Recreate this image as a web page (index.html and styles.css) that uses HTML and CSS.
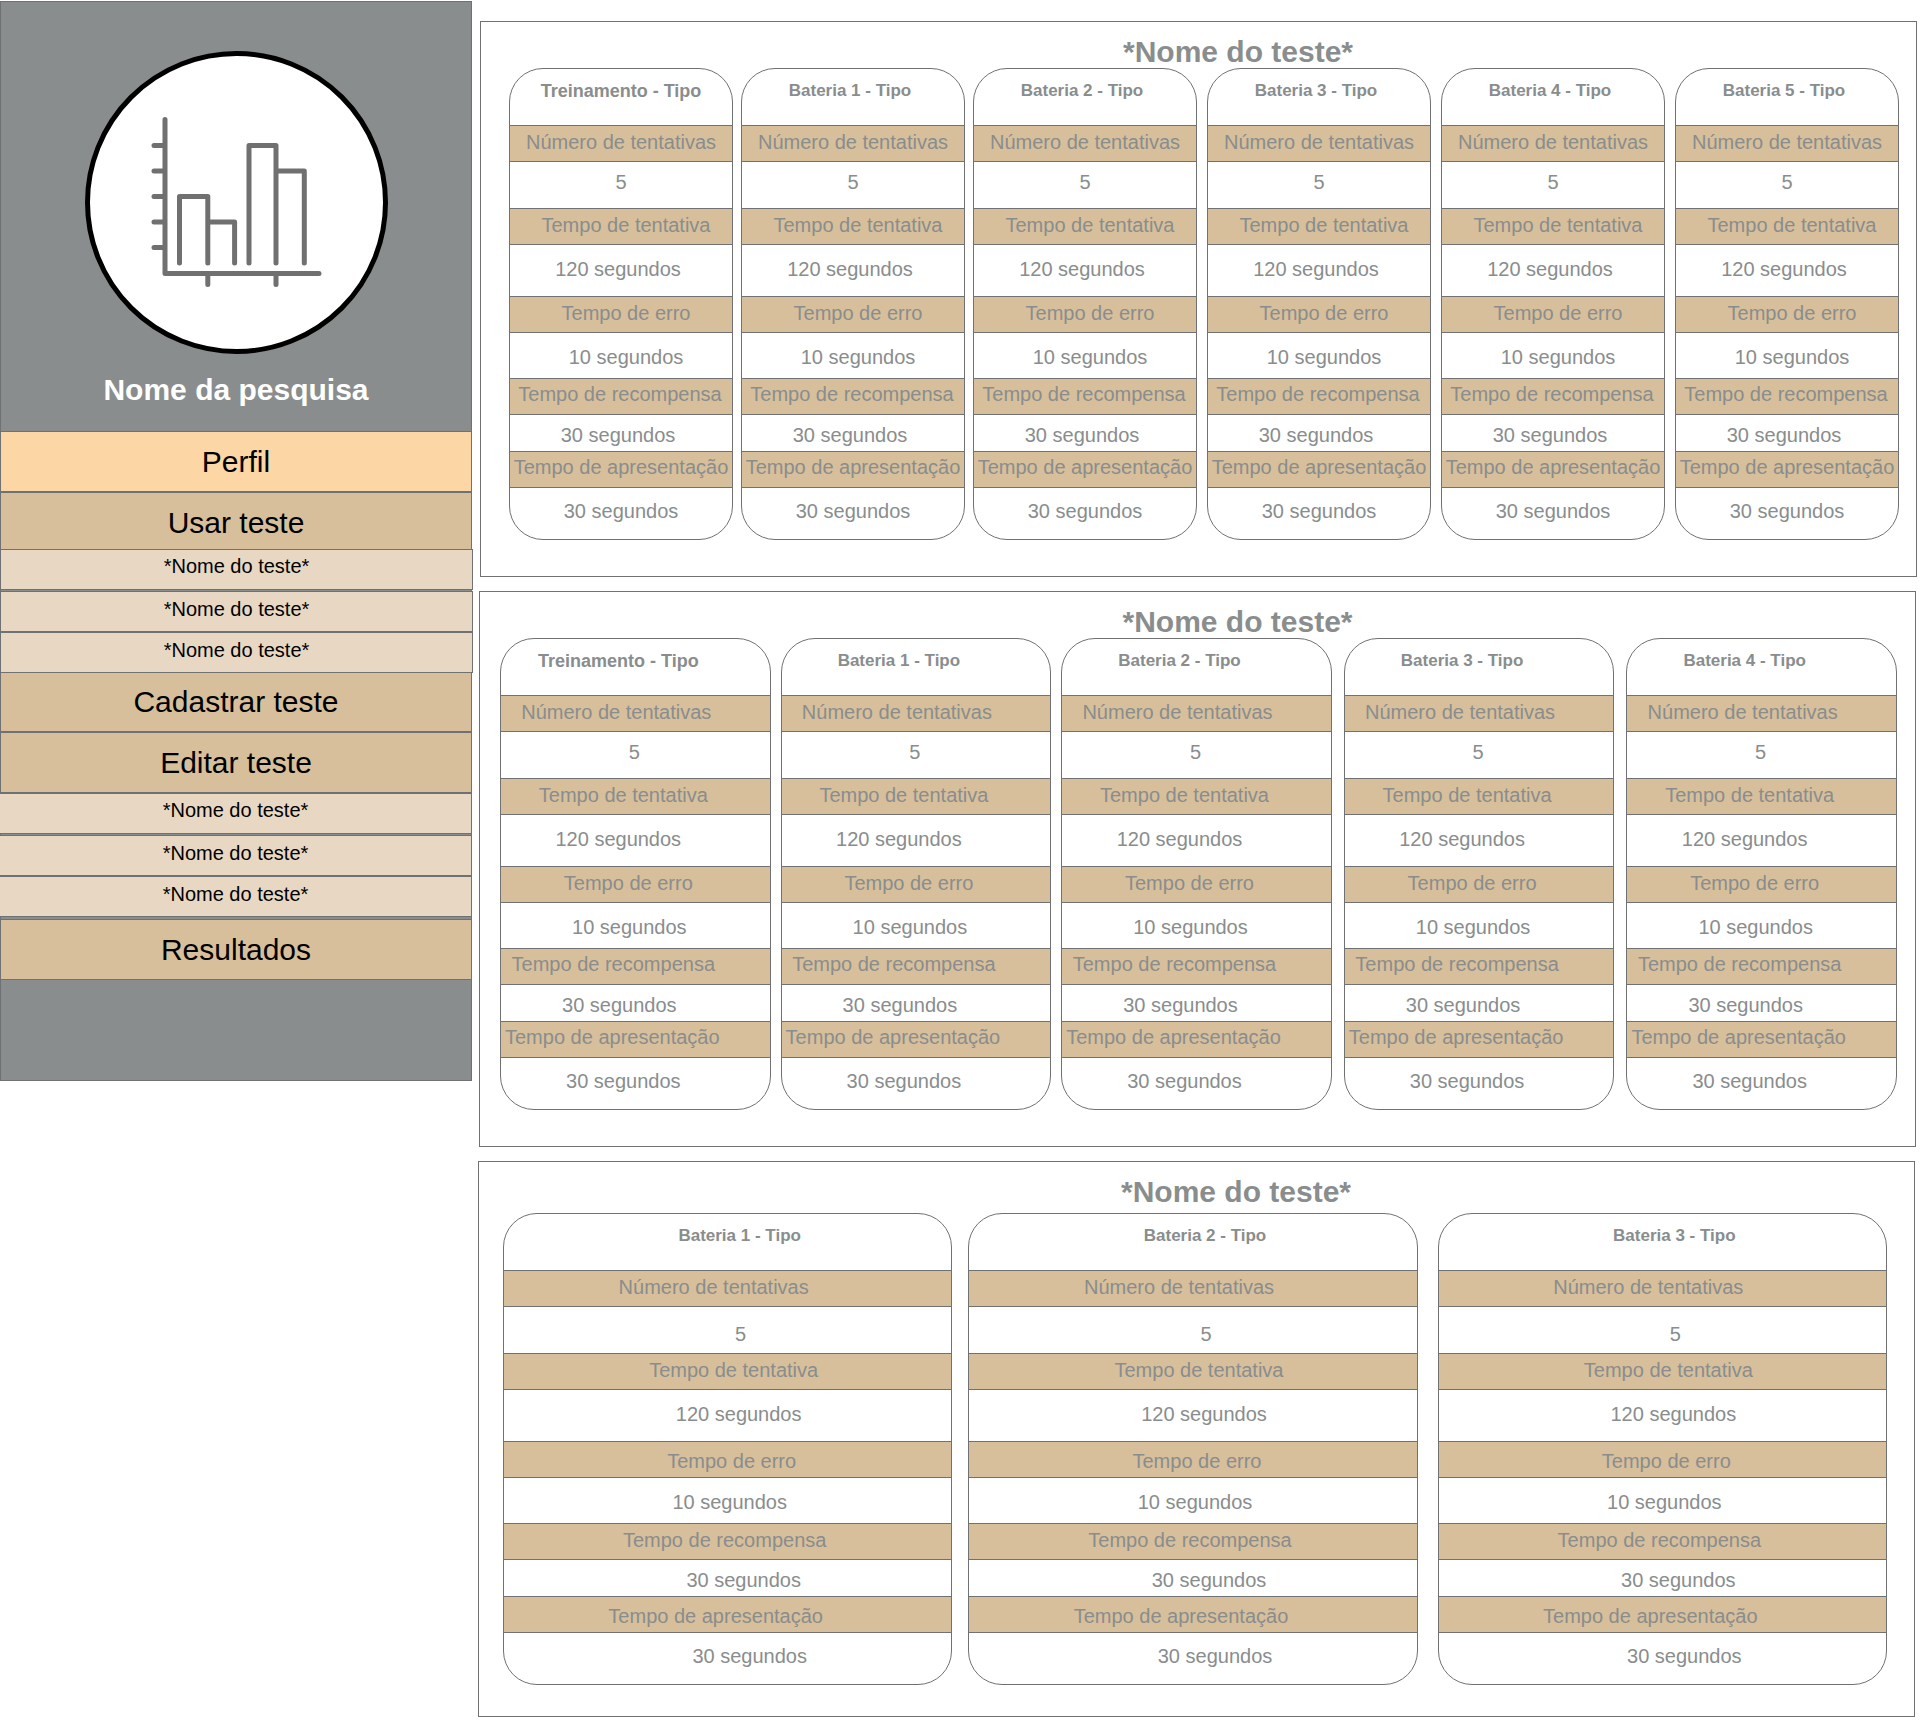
FILE: index.html
```html
<!DOCTYPE html>
<html lang="pt-BR">
<head>
<meta charset="utf-8">
<meta name="viewport" content="width=device-width, initial-scale=1">
<title>Nome da pesquisa</title>
<link rel="stylesheet" href="styles.css">
</head>
<body>
<div class="page">
<aside class="sidebar">
  <svg class="avatar" viewBox="85 51 303 303" aria-hidden="true">
    <circle class="avatar-disc" cx="236.500" cy="202.500" r="149"/>
    <path class="avatar-chart" d="M165 119.500V273.500H319M154 145.500H165M154 171H165M154 196.500H165M154 222H165M154 247.500H165M179.500 263V196.500H207.800V263M207.800 222H234.600V263M249 263V145.500H276V263M276 171H304.300V263M207.800 273.500V284.500M276 273.500V284.500"/>
  </svg>
  <h1 class="research-name">Nome da pesquisa</h1>
  <nav class="menu">
    <a class="menu-item menu-item--active" href="#perfil">Perfil</a>
    <a class="menu-item" href="#usar">Usar teste</a>
    <div class="submenu submenu--use">
      <a class="submenu-item submenu-item--first" href="#usar-1">*Nome do teste*</a>
      <a class="submenu-item" href="#usar-2">*Nome do teste*</a>
      <a class="submenu-item" href="#usar-3">*Nome do teste*</a>
    </div>
    <a class="menu-item" href="#cadastrar">Cadastrar teste</a>
    <a class="menu-item" href="#editar">Editar teste</a>
    <div class="submenu submenu--edit">
      <a class="submenu-item submenu-item--first" href="#editar-1">*Nome do teste*</a>
      <a class="submenu-item" href="#editar-2">*Nome do teste*</a>
      <a class="submenu-item" href="#editar-3">*Nome do teste*</a>
    </div>
    <a class="menu-item" href="#resultados">Resultados</a>
  </nav>
</aside>
<main class="tests">
  <section class="panel panel--six">
    <h2 class="panel-title">*Nome do teste*</h2>
    <div class="cards">
      <article class="card">
        <h3 class="card-title card-title--training">Treinamento - Tipo</h3>
        <dl class="fields">
          <div class="field field--attempts"><dt>Número de tentativas</dt><dd>5</dd></div>
          <div class="field field--trial"><dt>Tempo de tentativa</dt><dd>120 segundos</dd></div>
          <div class="field field--error"><dt>Tempo de erro</dt><dd>10 segundos</dd></div>
          <div class="field field--reward"><dt>Tempo de recompensa</dt><dd>30 segundos</dd></div>
          <div class="field field--display"><dt>Tempo de apresentação</dt><dd>30 segundos</dd></div>
        </dl>
      </article>
      <article class="card">
        <h3 class="card-title">Bateria 1 - Tipo</h3>
        <dl class="fields">
          <div class="field field--attempts"><dt>Número de tentativas</dt><dd>5</dd></div>
          <div class="field field--trial"><dt>Tempo de tentativa</dt><dd>120 segundos</dd></div>
          <div class="field field--error"><dt>Tempo de erro</dt><dd>10 segundos</dd></div>
          <div class="field field--reward"><dt>Tempo de recompensa</dt><dd>30 segundos</dd></div>
          <div class="field field--display"><dt>Tempo de apresentação</dt><dd>30 segundos</dd></div>
        </dl>
      </article>
      <article class="card">
        <h3 class="card-title">Bateria 2 - Tipo</h3>
        <dl class="fields">
          <div class="field field--attempts"><dt>Número de tentativas</dt><dd>5</dd></div>
          <div class="field field--trial"><dt>Tempo de tentativa</dt><dd>120 segundos</dd></div>
          <div class="field field--error"><dt>Tempo de erro</dt><dd>10 segundos</dd></div>
          <div class="field field--reward"><dt>Tempo de recompensa</dt><dd>30 segundos</dd></div>
          <div class="field field--display"><dt>Tempo de apresentação</dt><dd>30 segundos</dd></div>
        </dl>
      </article>
      <article class="card card--spaced">
        <h3 class="card-title">Bateria 3 - Tipo</h3>
        <dl class="fields">
          <div class="field field--attempts"><dt>Número de tentativas</dt><dd>5</dd></div>
          <div class="field field--trial"><dt>Tempo de tentativa</dt><dd>120 segundos</dd></div>
          <div class="field field--error"><dt>Tempo de erro</dt><dd>10 segundos</dd></div>
          <div class="field field--reward"><dt>Tempo de recompensa</dt><dd>30 segundos</dd></div>
          <div class="field field--display"><dt>Tempo de apresentação</dt><dd>30 segundos</dd></div>
        </dl>
      </article>
      <article class="card card--spaced">
        <h3 class="card-title">Bateria 4 - Tipo</h3>
        <dl class="fields">
          <div class="field field--attempts"><dt>Número de tentativas</dt><dd>5</dd></div>
          <div class="field field--trial"><dt>Tempo de tentativa</dt><dd>120 segundos</dd></div>
          <div class="field field--error"><dt>Tempo de erro</dt><dd>10 segundos</dd></div>
          <div class="field field--reward"><dt>Tempo de recompensa</dt><dd>30 segundos</dd></div>
          <div class="field field--display"><dt>Tempo de apresentação</dt><dd>30 segundos</dd></div>
        </dl>
      </article>
      <article class="card card--spaced">
        <h3 class="card-title">Bateria 5 - Tipo</h3>
        <dl class="fields">
          <div class="field field--attempts"><dt>Número de tentativas</dt><dd>5</dd></div>
          <div class="field field--trial"><dt>Tempo de tentativa</dt><dd>120 segundos</dd></div>
          <div class="field field--error"><dt>Tempo de erro</dt><dd>10 segundos</dd></div>
          <div class="field field--reward"><dt>Tempo de recompensa</dt><dd>30 segundos</dd></div>
          <div class="field field--display"><dt>Tempo de apresentação</dt><dd>30 segundos</dd></div>
        </dl>
      </article>
    </div>
  </section>

  <section class="panel panel--five">
    <h2 class="panel-title">*Nome do teste*</h2>
    <div class="cards">
      <article class="card">
        <h3 class="card-title card-title--training">Treinamento - Tipo</h3>
        <dl class="fields">
          <div class="field field--attempts"><dt>Número de tentativas</dt><dd>5</dd></div>
          <div class="field field--trial"><dt>Tempo de tentativa</dt><dd>120 segundos</dd></div>
          <div class="field field--error"><dt>Tempo de erro</dt><dd>10 segundos</dd></div>
          <div class="field field--reward"><dt>Tempo de recompensa</dt><dd>30 segundos</dd></div>
          <div class="field field--display"><dt>Tempo de apresentação</dt><dd>30 segundos</dd></div>
        </dl>
      </article>
      <article class="card">
        <h3 class="card-title">Bateria 1 - Tipo</h3>
        <dl class="fields">
          <div class="field field--attempts"><dt>Número de tentativas</dt><dd>5</dd></div>
          <div class="field field--trial"><dt>Tempo de tentativa</dt><dd>120 segundos</dd></div>
          <div class="field field--error"><dt>Tempo de erro</dt><dd>10 segundos</dd></div>
          <div class="field field--reward"><dt>Tempo de recompensa</dt><dd>30 segundos</dd></div>
          <div class="field field--display"><dt>Tempo de apresentação</dt><dd>30 segundos</dd></div>
        </dl>
      </article>
      <article class="card">
        <h3 class="card-title">Bateria 2 - Tipo</h3>
        <dl class="fields">
          <div class="field field--attempts"><dt>Número de tentativas</dt><dd>5</dd></div>
          <div class="field field--trial"><dt>Tempo de tentativa</dt><dd>120 segundos</dd></div>
          <div class="field field--error"><dt>Tempo de erro</dt><dd>10 segundos</dd></div>
          <div class="field field--reward"><dt>Tempo de recompensa</dt><dd>30 segundos</dd></div>
          <div class="field field--display"><dt>Tempo de apresentação</dt><dd>30 segundos</dd></div>
        </dl>
      </article>
      <article class="card card--spaced">
        <h3 class="card-title">Bateria 3 - Tipo</h3>
        <dl class="fields">
          <div class="field field--attempts"><dt>Número de tentativas</dt><dd>5</dd></div>
          <div class="field field--trial"><dt>Tempo de tentativa</dt><dd>120 segundos</dd></div>
          <div class="field field--error"><dt>Tempo de erro</dt><dd>10 segundos</dd></div>
          <div class="field field--reward"><dt>Tempo de recompensa</dt><dd>30 segundos</dd></div>
          <div class="field field--display"><dt>Tempo de apresentação</dt><dd>30 segundos</dd></div>
        </dl>
      </article>
      <article class="card card--spaced">
        <h3 class="card-title">Bateria 4 - Tipo</h3>
        <dl class="fields">
          <div class="field field--attempts"><dt>Número de tentativas</dt><dd>5</dd></div>
          <div class="field field--trial"><dt>Tempo de tentativa</dt><dd>120 segundos</dd></div>
          <div class="field field--error"><dt>Tempo de erro</dt><dd>10 segundos</dd></div>
          <div class="field field--reward"><dt>Tempo de recompensa</dt><dd>30 segundos</dd></div>
          <div class="field field--display"><dt>Tempo de apresentação</dt><dd>30 segundos</dd></div>
        </dl>
      </article>
    </div>
  </section>

  <section class="panel panel--three">
    <h2 class="panel-title">*Nome do teste*</h2>
    <div class="cards">
      <article class="card">
        <h3 class="card-title">Bateria 1 - Tipo</h3>
        <dl class="fields">
          <div class="field field--attempts"><dt>Número de tentativas</dt><dd>5</dd></div>
          <div class="field field--trial"><dt>Tempo de tentativa</dt><dd>120 segundos</dd></div>
          <div class="field field--error"><dt>Tempo de erro</dt><dd>10 segundos</dd></div>
          <div class="field field--reward"><dt>Tempo de recompensa</dt><dd>30 segundos</dd></div>
          <div class="field field--display"><dt>Tempo de apresentação</dt><dd>30 segundos</dd></div>
        </dl>
      </article>
      <article class="card">
        <h3 class="card-title">Bateria 2 - Tipo</h3>
        <dl class="fields">
          <div class="field field--attempts"><dt>Número de tentativas</dt><dd>5</dd></div>
          <div class="field field--trial"><dt>Tempo de tentativa</dt><dd>120 segundos</dd></div>
          <div class="field field--error"><dt>Tempo de erro</dt><dd>10 segundos</dd></div>
          <div class="field field--reward"><dt>Tempo de recompensa</dt><dd>30 segundos</dd></div>
          <div class="field field--display"><dt>Tempo de apresentação</dt><dd>30 segundos</dd></div>
        </dl>
      </article>
      <article class="card card--spaced">
        <h3 class="card-title">Bateria 3 - Tipo</h3>
        <dl class="fields">
          <div class="field field--attempts"><dt>Número de tentativas</dt><dd>5</dd></div>
          <div class="field field--trial"><dt>Tempo de tentativa</dt><dd>120 segundos</dd></div>
          <div class="field field--error"><dt>Tempo de erro</dt><dd>10 segundos</dd></div>
          <div class="field field--reward"><dt>Tempo de recompensa</dt><dd>30 segundos</dd></div>
          <div class="field field--display"><dt>Tempo de apresentação</dt><dd>30 segundos</dd></div>
        </dl>
      </article>
    </div>
  </section>
</main>
</div>
</body>
</html>
```
FILE: styles.css
```css
:root {
  --line: #6f7172;
  --gray: #898d8d;
  --tan: #d7bf9b;
  --tan-light: #e8d8c3;
  --peach: #fcd6a4;
}

* {
  box-sizing: border-box;
}

body {
  margin: 0;
  background: #fff;
  color: #000;
  font-family: "Liberation Sans", Arial, sans-serif;
  font-size: 20px;
}

h1, h2, h3, dl, dd {
  margin: 0;
}

.page {
  display: flex;
  align-items: flex-start;
  gap: 6px;
  padding-top: 1px;
}

/* Sidebar */
.sidebar {
  flex: 0 0 472px;
  padding: 49px 0 100px;
  background: var(--gray);
  border: 1px solid var(--line);
}

.avatar {
  display: block;
  width: 303px;
  margin: 0 auto 18px;
}

.avatar-disc {
  fill: #fff;
  stroke: #000;
  stroke-width: 5;
}

.avatar-chart {
  fill: none;
  stroke: #707070;
  stroke-width: 5;
  stroke-linecap: round;
  stroke-linejoin: round;
}

.research-name {
  margin-bottom: 23px;
  color: #fff;
  font-size: 30px;
  line-height: 36px;
  text-align: center;
}

.menu {
  margin: 0 -1px;
}

.menu-item,
.submenu-item {
  display: block;
  border: 1px solid var(--line);
  color: #000;
  text-align: center;
  text-decoration: none;
}

.menu-item {
  background: var(--tan);
  font-size: 30px;
  line-height: 59px;
}

.menu-item--active {
  background: var(--peach);
}

.submenu-item {
  padding: 5px 0 10px;
  background: var(--tan-light);
  line-height: 24px;
}

.submenu-item--first {
  margin-bottom: 1px;
  padding: 4px 0 11px;
}

/* Lies over the edges of the neighbouring menu items */
.submenu--use {
  position: relative;
  margin: -4px -1px -2px 0;
}

.submenu--edit {
  margin-bottom: 2px;
}

.submenu--edit .submenu-item {
  border-left: 0;
}

/* Test panels */
.tests {
  flex: 1;
  display: grid;
  gap: 14px;
  min-width: 0;
  padding-top: 20px;
}

.panel {
  border: 1px solid var(--line);
}

.panel--six {
  margin: 0 3px 0 2px;
  padding: 14px 17px 36px 28px;
}

.panel--five {
  margin: 0 4px 0 1px;
  padding: 14px 18px 36px 20px;
}

.panel--three {
  margin: 0 5px 0 0;
  padding: 14px 27px 31px 24px;
}

.panel-title {
  padding-left: 68px;
  color: var(--gray);
  font-size: 30px;
  line-height: 32px;
  text-align: center;
}

.panel--five .panel-title {
  padding-left: 78px;
}

.panel--three .panel-title {
  padding: 0 0 5px 82px;
}

.cards {
  display: flex;
  gap: 8px;
}

.panel--five .cards {
  gap: 10px;
}

.panel--three .cards {
  gap: 16px;
}

.card {
  flex: 1 1 0;
  min-width: 0;
  border: 1px solid var(--line);
  border-radius: 34px;
  color: var(--gray);
  text-align: center;
}

.card--spaced {
  margin-left: 2px;
}

.panel--three .card--spaced {
  margin-left: 4px;
}

.card-title {
  padding: 12px 6px 24px 0;
  font-size: 17px;
  line-height: 20px;
}

.card-title--training {
  padding-right: 0;
  font-size: 18px;
}

dt {
  height: 37px;
  background: var(--tan);
  border: 1px solid var(--line);
  border-width: 1px 0;
  line-height: 32px;
}

dd {
  line-height: 24px;
}

.field--attempts dd { padding: 8px 0 14px; }
.field--trial dt { padding-left: 10px; }
.field--trial dd { padding: 12px 6px 15px 0; }
.field--error dt { padding-left: 10px; }
.field--error dd { padding: 12px 0 9px 10px; }
.field--reward dt { padding-right: 2px; line-height: 30px; }
.field--reward dd { padding: 8px 6px 4px 0; }
.field--display dt { line-height: 30px; }
.field--display dd { padding: 11px 0 16px; }

/* Five-card panel: contents sit left of the card's centre */
.panel--five .card-title { padding-right: 34px; }
.panel--five .field--attempts dt { padding-right: 38px; }
.panel--five .field--attempts dd { padding-right: 2px; }
.panel--five .field--trial dt { padding: 0 24px 0 0; }
.panel--five .field--trial dd { padding-right: 34px; }
.panel--five .field--error dt { padding: 0 14px 0 0; }
.panel--five .field--error dd { padding: 12px 12px 9px 0; }
.panel--five .field--reward dt { padding-right: 44px; }
.panel--five .field--reward dd { padding-right: 32px; }
.panel--five .field--display dt { padding-right: 46px; }
.panel--five .field--display dd { padding-right: 24px; }

/* Three-card panel */
.panel--three .card-title { padding: 12px 0 24px 24px; }
.panel--three .field--attempts dt { padding-right: 28px; }
.panel--three .field--attempts dd { padding: 15px 0 7px 26px; }
.panel--three .field--trial dt { padding-left: 12px; }
.panel--three .field--trial dd { padding: 12px 0 15px 22px; }
.panel--three .field--error dt { padding: 3px 0 0 8px; }
.panel--three .field--error dd { padding-left: 4px; }
.panel--three .field--reward dt { padding-right: 6px; line-height: 32px; }
.panel--three .field--reward dd { padding: 8px 0 4px 32px; }
.panel--three .field--display dt { padding: 4px 24px 0 0; }
.panel--three .field--display dd { padding-left: 44px; }

@media (max-width: 1400px) {
  .page { flex-direction: column; gap: 0; }
  .sidebar { flex: none; width: 100%; }
  .tests { width: 100%; }
  .cards { flex-wrap: wrap; }
  .card { flex-basis: 224px; }
}
```
